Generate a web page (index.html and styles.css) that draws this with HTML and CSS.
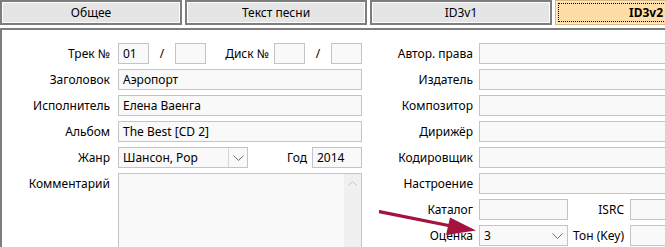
FILE: index.html
```html
<!DOCTYPE html>
<html lang="ru">
<head>
    <meta charset="UTF-8">
    <title>Теги</title>
    <link rel="stylesheet" href="styles.css">
</head>
<body>

    <nav class="tabs">
        <div class="tab">Общее</div>
        <div class="tab">Текст песни</div>
        <div class="tab">ID3v1</div>
        <div class="tab tab-active"><span class="focus">ID3v2</span></div>
    </nav>

    <main class="panel">
        <div class="form">
            <!-- левая колонка -->
            <div class="col col-left">
                <div class="row">
                    <span class="lbl">Трек №</span>
                    <div class="pair">
                        <div class="field w-num">01</div>
                        <span class="slash">/</span>
                        <div class="field w-num"></div>
                        <span class="lbl lbl-inline">Диск №</span>
                        <div class="field w-num"></div>
                        <span class="slash">/</span>
                        <div class="field w-num"></div>
                    </div>
                </div>
                <div class="row">
                    <span class="lbl">Заголовок</span>
                    <div class="field">Аэропорт</div>
                </div>
                <div class="row">
                    <span class="lbl">Исполнитель</span>
                    <div class="field">Елена Ваенга</div>
                </div>
                <div class="row">
                    <span class="lbl">Альбом</span>
                    <div class="field">The Best [CD 2]</div>
                </div>
                <div class="row">
                    <span class="lbl">Жанр</span>
                    <div class="pair">
                        <div class="field combo w-genre">
                            <span>Шансон, Pop</span>
                            <span class="drop drop-split">
                                <svg width="11" height="6" viewBox="0 0 11 6"><path d="M0.5 0.5 L5.5 5.5 L10.5 0.5" fill="none" stroke="#6f6f6f"/></svg>
                            </span>
                        </div>
                        <span class="lbl lbl-inline">Год</span>
                        <div class="field w-year">2014</div>
                    </div>
                </div>
                <div class="row row-memo">
                    <span class="lbl">Комментарий</span>
                    <div class="field memo">
                        <div class="memo-text"></div>
                        <div class="memo-scroll">
                            <svg width="9" height="5" viewBox="0 0 9 5"><path d="M0.5 4.5 L4.5 0.5 L8.5 4.5" fill="none" stroke="#c2c2c2"/></svg>
                        </div>
                    </div>
                </div>
            </div>

            <!-- правая колонка -->
            <div class="col col-right">
                <div class="row"><span class="lbl">Автор. права</span><div class="field"></div></div>
                <div class="row"><span class="lbl">Издатель</span><div class="field"></div></div>
                <div class="row"><span class="lbl">Композитор</span><div class="field"></div></div>
                <div class="row"><span class="lbl">Дирижёр</span><div class="field"></div></div>
                <div class="row"><span class="lbl">Кодировщик</span><div class="field"></div></div>
                <div class="row"><span class="lbl">Настроение</span><div class="field"></div></div>
                <div class="row">
                    <span class="lbl">Каталог</span>
                    <div class="pair">
                        <div class="field w-small"></div>
                        <span class="lbl lbl-sub">ISRC</span>
                        <div class="field"></div>
                    </div>
                </div>
                <div class="row">
                    <span class="lbl">Оценка</span>
                    <div class="pair">
                        <div class="field combo w-small">
                            <span>3</span>
                            <span class="drop">
                                <svg width="11" height="6" viewBox="0 0 11 6"><path d="M0.5 0.5 L5.5 5.5 L10.5 0.5" fill="none" stroke="#6f6f6f"/></svg>
                            </span>
                        </div>
                        <span class="lbl lbl-sub">Тон (Key)</span>
                        <div class="field"></div>
                    </div>
                </div>
            </div>
        </div>

        <!-- красная стрелка-указатель -->
        <svg class="pointer" width="110" height="30" viewBox="0 0 110 30">
            <path d="M0 1.5 L82 18" stroke="#a3133d" stroke-width="3.2" stroke-linecap="round" fill="none"/>
            <path d="M71 7.5 L97 20.5 L67 25 Z" fill="#a3133d"/>
        </svg>
    </main>

</body>
</html>
```

FILE: styles.css
```css
:root {
    --frame: #7d7d7d;
    --field-border: #c4c4c4;
    --field-bg: #f9f9f9;
    --text: #000;
}

* {
    margin: 0;
    padding: 0;
    box-sizing: border-box;
}

html, body {
    overflow: hidden;
}

body {
    font-family: 'Noto Sans', 'Open Sans', sans-serif;
    font-size: 12px;
    color: var(--text);
    background: #fff;
    width: 665px;
    height: 247px;
}

/* --- вкладки --- */
.tabs {
    display: flex;
    gap: 3px;
    height: 25px;
    overflow: hidden;
}
.tab {
    flex: 0 0 182px;
    border: 2px solid var(--frame);
    box-shadow: inset 0 0 0 1px #fdfdfd;
    background: #e5e5e5;
    display: flex;
    align-items: center;
    justify-content: center;
}
.tab-active {
    background: #ffdda6;
    border: 1px solid #d8b98a;
    box-shadow: inset 0 0 0 1px #ffe9c6;
    padding: 2px;
    font-weight: 700;
}
.tab-active .focus {
    flex: 1;
    align-self: stretch;
    display: flex;
    align-items: center;
    justify-content: center;
    border: 1px dotted #000;
}

/* --- основная панель --- */
.panel {
    position: relative;
    margin-top: 3px;
    height: 219px;
    overflow: hidden;
    border-top: 2px solid var(--frame);
    border-left: 2px solid var(--frame);
    padding-top: 13px;
}

.form {
    display: flex;
}

.col {
    display: flex;
    flex-direction: column;
    gap: 5px;
}
.col-left {
    flex: 0 0 360px;
}
.col-right {
    flex: 0 0 400px;
}

.row {
    display: grid;
    height: 21px;
    align-items: center;
}
.col-left .row {
    grid-template-columns: 108px 244px;
    column-gap: 8px;
}
.col-right .row {
    grid-template-columns: 111px 250px;
    column-gap: 6px;
}

.lbl {
    text-align: right;
    white-space: nowrap;
    line-height: 21px;
}

.pair {
    display: flex;
    align-items: center;
    height: 21px;
}
.lbl-inline {
    flex: 1;
    padding-right: 5px;
}
.lbl-sub {
    width: 62px;
    padding-right: 6px;
}
.slash {
    width: 26px;
    text-align: center;
}

/* --- поля ввода --- */
.field {
    height: 21px;
    border: 1px solid var(--field-border);
    background: var(--field-bg);
    padding: 0 4px;
    line-height: 19px;
    white-space: nowrap;
    overflow: hidden;
}
.pair .field {
    flex: 0 0 auto;
}
.pair .field:last-child {
    flex: 1;
}
.w-num { width: 31px; }
.w-year { width: 50px; }
.w-genre { width: 130px; }
.w-small { width: 89px; }

.pair .w-num:last-child,
.pair .w-year:last-child {
    flex: 0 0 auto;
}

.combo {
    display: flex;
    justify-content: space-between;
    padding-right: 0;
}
.drop {
    width: 19px;
    display: flex;
    align-items: center;
    justify-content: center;
}
.drop-split {
    border-left: 1px solid #d6d6d6;
}

/* --- комментарий --- */
.row-memo {
    height: 120px;
    align-items: start;
}
.memo {
    height: 120px;
    display: flex;
    padding: 0;
}
.memo-text {
    flex: 1;
}
.memo-scroll {
    width: 17px;
    background: #f0f0f0;
    display: flex;
    justify-content: center;
    padding-top: 7px;
}

/* --- стрелка --- */
.pointer {
    position: absolute;
    left: 377px;
    top: 180px;
}
```
